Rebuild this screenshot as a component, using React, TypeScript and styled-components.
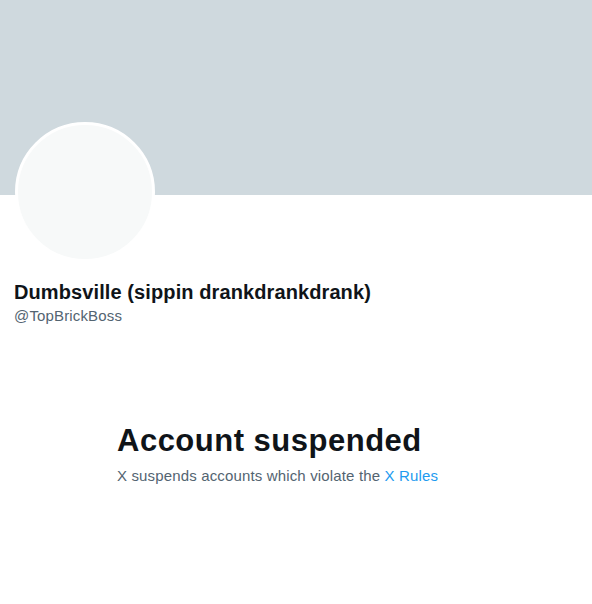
import React from "react";
import styled, { createGlobalStyle } from "styled-components";

const Global = createGlobalStyle`
  html, body { margin: 0; padding: 0; background: #ffffff; }
  body { font-family: "Liberation Sans", Arial, sans-serif; }
`;

const Page = styled.div`
  width: 592px;
  height: 604px;
  background: #ffffff;
  display: flex;
  flex-direction: column;
`;

const Banner = styled.div`
  height: 195px;
  background: #cfd9de;
`;

const ProfileInfo = styled.div`
  padding: 0 14px;
  display: flex;
  flex-direction: column;
`;

const Avatar = styled.div`
  width: 134px;
  height: 134px;
  margin-top: -73px;
  margin-left: 1px;
  border: 3px solid #ffffff;
  border-radius: 50%;
  background: #f7f9f9;
`;

const Name = styled.h2`
  margin: 18px 0 0;
  font-size: 20px;
  line-height: 24px;
  font-weight: 700;
  letter-spacing: 0.1px;
  color: #0f1419;
`;

const Handle = styled.div`
  margin-top: 2px;
  font-size: 15px;
  line-height: 20px;
  letter-spacing: 0.15px;
  color: #536471;
`;

const Empty = styled.div`
  width: 358px;
  margin: 97px auto 0;
  display: flex;
  flex-direction: column;
  gap: 7px;
`;

const Title = styled.h1`
  margin: 0;
  font-size: 31px;
  line-height: 36px;
  font-weight: 800;
  letter-spacing: 0.5px;
  color: #0f1419;
`;

const Sub = styled.p`
  margin: 0;
  font-size: 15px;
  line-height: 20px;
  letter-spacing: 0.15px;
  color: #536471;
`;

const Link = styled.a`
  color: #1d9bf0;
  text-decoration: none;
`;

export default function App() {
  return (
    <>
      <Global />
      <Page>
        <Banner />
        <ProfileInfo>
          <Avatar />
          <Name>Dumbsville (sippin drankdrankdrank)</Name>
          <Handle>@TopBrickBoss</Handle>
        </ProfileInfo>
        <Empty>
          <Title>Account suspended</Title>
          <Sub>
            X suspends accounts which violate the <Link href="#">X Rules</Link>
          </Sub>
        </Empty>
      </Page>
    </>
  );
}
